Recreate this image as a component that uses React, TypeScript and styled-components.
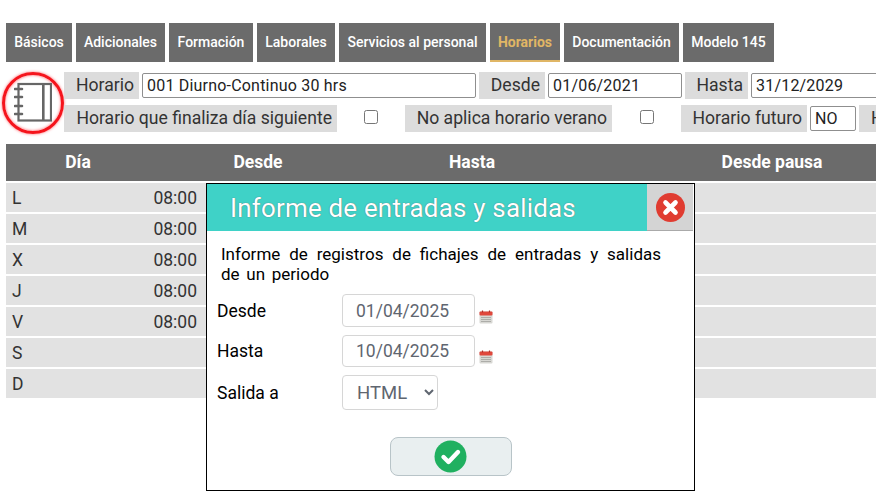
import { createGlobalStyle } from "styled-components";
import styled from "styled-components";

const tabs = [
  { label: "Básicos", w: 66 },
  { label: "Adicionales", w: 89 },
  { label: "Formación", w: 84 },
  { label: "Laborales", w: 78 },
  { label: "Servicios al personal", w: 147 },
  { label: "Horarios", w: 70 },
  { label: "Documentación", w: 115 },
  { label: "Modelo 145", w: 91 },
];
const days = [
  { day: "L", from: "08:00" },
  { day: "M", from: "08:00" },
  { day: "X", from: "08:00" },
  { day: "J", from: "08:00" },
  { day: "V", from: "08:00" },
  { day: "S", from: "" },
  { day: "D", from: "" },
];

function NotebookIcon() {
  return (
    <svg width="38" height="42" viewBox="0 0 38 42" fill="none" stroke="#666" strokeWidth="2.2">
      <rect x="4.5" y="2" width="32.5" height="36.5" />
      <path d="M29.3 2v36.5" strokeWidth="2.6" />
      <path d="M1 7h7M1 15h7M1 24h7M1 32h7" strokeWidth="2.6" strokeLinecap="round" />
    </svg>
  );
}

function CalendarIcon() {
  return (
    <svg width="14" height="14" viewBox="0 0 14 14">
      <rect x="0.5" y="1.5" width="13" height="12" rx="1" fill="#d8d8d4" />
      <rect x="0.5" y="1.5" width="13" height="4" rx="1" fill="#e0473c" />
      <path d="M3.5 0.5v2M10.5 0.5v2" stroke="#b03028" strokeWidth="1.2" />
      <path d="M2 7.5h10M2 9.5h10M2 11.5h10" stroke="#a8a8a4" strokeWidth="0.9" />
    </svg>
  );
}

export default function App() {
  return (
    <Page>
      <GlobalStyle />
      <Tabs>
        {tabs.map((t) => (
          <Tab key={t.label} $w={t.w} $active={t.label === "Horarios"}>{t.label}</Tab>
        ))}
      </Tabs>
      <Head>
        <IconRing>
          <NotebookIcon />
        </IconRing>
        <HeadRows>
          <HeadRow>
            <FieldLabel $w={75}>Horario</FieldLabel>
            <TextBox $w={334} defaultValue="001 Diurno-Continuo 30 hrs" />
            <FieldLabel $w={66}>Desde</FieldLabel>
            <TextBox $w={134} defaultValue="01/06/2021" />
            <FieldLabel $w={63}>Hasta</FieldLabel>
            <TextBox $w={134} defaultValue="31/12/2029" />
          </HeadRow>
          <HeadRow>
            <FieldLabel $w={273}>Horario que finaliza día siguiente</FieldLabel>
            <CheckCell $w={62}><input type="checkbox" /></CheckCell>
            <FieldLabel $w={207}>No aplica horario verano</FieldLabel>
            <CheckCell $w={63}><input type="checkbox" /></CheckCell>
            <FieldLabel $w={126}>Horario futuro</FieldLabel>
            <TextBox $w={46} defaultValue="NO" />
            <FieldLabel $w={75}>Horario</FieldLabel>
          </HeadRow>
        </HeadRows>
      </Head>
      <TableHead>
        <span>Día</span>
        <span>Desde</span>
        <span>Hasta</span>
        <span>Desde pausa</span>
      </TableHead>
      {days.map((d) => (
        <DayRow key={d.day}>
          <DayInner>
            <span>{d.day}</span>
            <span>{d.from}</span>
          </DayInner>
        </DayRow>
      ))}
      <Modal>
        <ModalHeader>
          <ModalTitle>Informe de entradas y salidas</ModalTitle>
          <CloseBox>
            <svg width="29" height="29" viewBox="0 0 29 29">
              <circle cx="14.5" cy="14.5" r="14.5" fill="#e03c31" />
              <path d="M9.5 9.5l10 10M19.5 9.5l-10 10" stroke="#fff" strokeWidth="4.6" strokeLinecap="round" />
            </svg>
          </CloseBox>
        </ModalHeader>
        <ModalBody>
          <Intro>Informe de registros de fichajes de entradas y salidas de un periodo</Intro>
          <FormGrid>
            <FormLabel>Desde</FormLabel>
            <DateRow>
              <DateBox defaultValue="01/04/2025" />
              <CalendarSlot><CalendarIcon /></CalendarSlot>
            </DateRow>
            <FormLabel>Hasta</FormLabel>
            <DateRow>
              <DateBox defaultValue="10/04/2025" />
              <CalendarSlot><CalendarIcon /></CalendarSlot>
            </DateRow>
            <FormLabel>Salida a</FormLabel>
            <DateRow>
              <OutputSelect defaultValue="HTML">
                <option>HTML</option>
                <option>PDF</option>
              </OutputSelect>
            </DateRow>
          </FormGrid>
          <ConfirmRow>
            <ConfirmButton>
              <svg width="33" height="33" viewBox="0 0 33 33">
                <circle cx="16.5" cy="16.5" r="16" fill="#20b060" />
                <path d="M9.5 17l5 5 9.5-10" fill="none" stroke="#fff" strokeWidth="4.4" strokeLinecap="round" strokeLinejoin="round" />
              </svg>
            </ConfirmButton>
          </ConfirmRow>
        </ModalBody>
      </Modal>
    </Page>
  );
}

const GlobalStyle = createGlobalStyle`
  html, body {
    margin: 0;
    height: 100%;
    overflow: hidden;
    background: #fff;
  }
  * {
    box-sizing: border-box;
  }
`;

const Page = styled.div`
  position: relative;
  width: 876px;
  height: 493px;
  padding: 23px 0 0 6px;
  overflow: hidden;
  font-family: Roboto, "Liberation Sans", sans-serif;
  color: #333;
`;

const Tabs = styled.div`
  display: flex;
  gap: 4px;
`;

const Tab = styled.div<{ $w: number; $active?: boolean }>`
  flex: none;
  width: ${({ $w }) => $w}px;
  height: 39px;
  display: flex;
  align-items: center;
  justify-content: center;
  background: #6b6b6b;
  color: ${({ $active }) => ($active ? "#e0b665" : "#fff")};
  font-size: 14px;
  font-weight: ${({ $active }) => ($active ? 700 : 500)};
  border-bottom: 2px solid ${({ $active }) => ($active ? "#e0b665" : "#6b6b6b")};
`;

const Head = styled.div`
  display: flex;
  align-items: flex-start;
  margin: 10px 0 0 -4px;
`;

const IconRing = styled.div`
  flex: none;
  width: 62px;
  height: 62px;
  border-radius: 50%;
  border: 3px solid #f5141c;
  box-shadow: 0 0 3px #ff6068, inset 0 0 3px #ff6068;
  display: flex;
  align-items: center;
  justify-content: center;
`;

const HeadRows = styled.div`
  display: flex;
  flex-direction: column;
  gap: 6px;
  flex: none;
`;

const HeadRow = styled.div`
  display: flex;
  align-items: center;
  gap: 3px;
  height: 27px;
  white-space: nowrap;
`;

const FieldLabel = styled.div<{ $w: number }>`
  flex: none;
  width: ${({ $w }) => $w}px;
  height: 27px;
  display: flex;
  align-items: center;
  justify-content: flex-end;
  padding: 0 5px 1px 0;
  background: #dcdcdc;
  font-size: 17.6px;
`;

const TextBox = styled.input<{ $w: number }>`
  flex: none;
  width: ${({ $w }) => $w}px;
  height: 25px;
  padding: 0 4px;
  border: 1px solid #8f8f8f;
  border-radius: 2px;
  background: #fff;
  color: #222;
  font-family: inherit;
  font-size: 16px;
  letter-spacing: 0.2px;
`;

const CheckCell = styled.div<{ $w: number }>`
  flex: none;
  width: ${({ $w }) => $w}px;
  display: flex;
  justify-content: center;

  input {
    width: 14px;
    height: 14px;
    margin: 0 0 3px;
  }
`;

const TableHead = styled.div`
  display: grid;
  grid-template-columns: 144px 216px 212px 388px;
  align-items: center;
  justify-items: center;
  height: 37px;
  margin: 10px 0 2px;
  padding-bottom: 2px;
  background: #6b6b6b;
  color: #fff;
  font-size: 17.5px;
  font-weight: 700;
  width: 870px;
  overflow: hidden;
`;

const DayRow = styled.div`
  height: 29px;
  margin-bottom: 2px;
  width: 870px;
  background: #e2e2e2;
  display: flex;
  align-items: center;
  font-size: 17.5px;
`;

const DayInner = styled.div`
  width: 191px;
  padding-left: 6px;
  display: flex;
  justify-content: space-between;
`;

const Modal = styled.div`
  position: absolute;
  left: 206px;
  top: 183px;
  width: 489px;
  height: 308px;
  background: #fff;
  border: 1px solid #000;
`;

const ModalHeader = styled.div`
  display: flex;
  height: 47px;
  margin-right: 1px;
`;

const ModalTitle = styled.div`
  flex: 1;
  display: flex;
  align-items: center;
  padding-left: 23px;
  background: #3fd2c7;
  color: #fff;
  font-size: 26px;
  letter-spacing: 0.17px;
  text-shadow: 0 0 1px #555;
`;

const CloseBox = styled.div`
  flex: none;
  width: 46px;
  display: flex;
  align-items: center;
  justify-content: center;
  background: #d4d4d4;
  border-bottom: 1px solid #aaa;
`;

const ModalBody = styled.div`
  padding: 13px 10px 0;
  color: #000;
`;

const Intro = styled.p`
  margin: 0 23px 0 4px;
  font-size: 17px;
  line-height: 20px;
  word-spacing: 2.5px;
  text-align: justify;
`;

const FormGrid = styled.div`
  display: grid;
  grid-template-columns: 125px 1fr;
  grid-template-rows: 33px 32px 35px;
  row-gap: 8px;
  align-items: center;
  margin-top: 10px;
`;

const FormLabel = styled.label`
  font-size: 17.5px;
`;

const DateRow = styled.div`
  display: flex;
  align-items: stretch;
  height: 100%;
`;

const DateBox = styled.input`
  width: 133px;
  height: 100%;
  padding: 0 13px;
  border: 1px solid #d6d6d6;
  border-radius: 4px;
  background: #fff;
  color: #5f6670;
  font-family: inherit;
  font-size: 17.5px;
`;

const CalendarSlot = styled.span`
  display: flex;
  align-items: flex-end;
  margin-left: 4px;
  padding-bottom: 3px;
`;

const OutputSelect = styled.select`
  width: 96px;
  height: 100%;
  padding: 0 0 0 10px;
  border: 1px solid #d6d6d6;
  border-radius: 4px;
  background: #fff;
  color: #5f6670;
  font-family: inherit;
  font-size: 18.5px;
`;

const ConfirmRow = styled.div`
  display: flex;
  justify-content: center;
  margin: 27px 0 0 0;
`;

const ConfirmButton = styled.button`
  width: 122px;
  height: 39px;
  padding: 0;
  display: flex;
  align-items: center;
  justify-content: center;
  background: #e9eff0;
  border: 1px solid #b8c4c8;
  border-radius: 8px;
`;
